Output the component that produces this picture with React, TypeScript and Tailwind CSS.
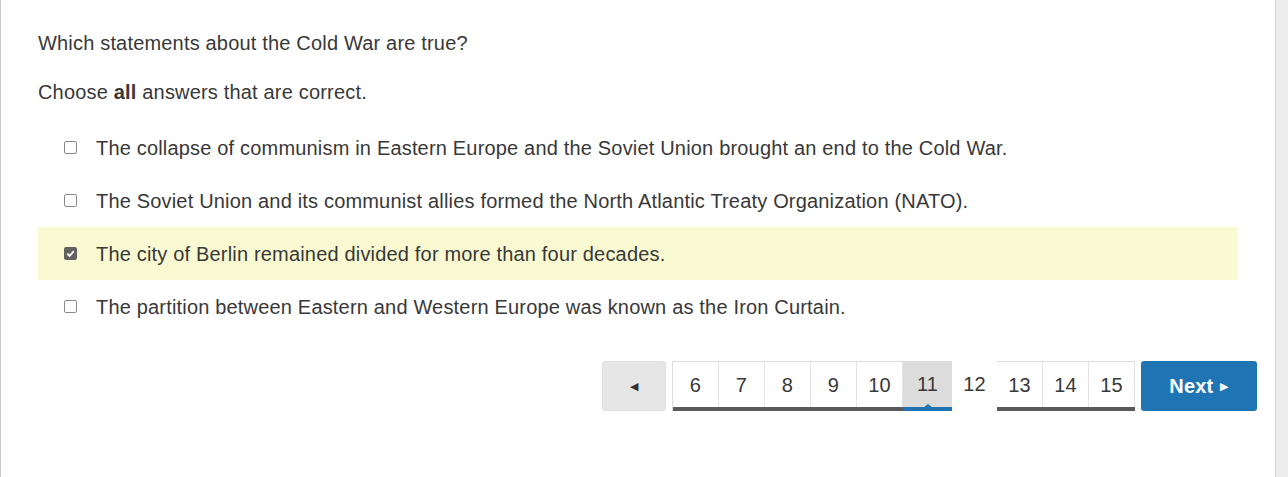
import React from 'react';

const options = [
  { text: 'The collapse of communism in Eastern Europe and the Soviet Union brought an end to the Cold War.', checked: false },
  { text: 'The Soviet Union and its communist allies formed the North Atlantic Treaty Organization (NATO).', checked: false },
  { text: 'The city of Berlin remained divided for more than four decades.', checked: true },
  { text: 'The partition between Eastern and Western Europe was known as the Iron Curtain.', checked: false },
];

const pages = [6, 7, 8, 9, 10, 11, 12, 13, 14, 15];

const Checkbox: React.FC<{ checked: boolean }> = ({ checked }) =>
  checked ? (
    <span className="w-[13px] h-[13px] rounded-[2px] bg-[#616161] flex items-center justify-center shrink-0">
      <svg width="9" height="9" viewBox="0 0 10 10">
        <path d="M1.5 5.2 L4 7.6 L8.6 2.4" fill="none" stroke="white" strokeWidth="2" />
      </svg>
    </span>
  ) : (
    <span className="w-[13px] h-[13px] rounded-[2px] border border-[#8a8a8a] bg-white shrink-0" />
  );

const PageCell: React.FC<{ n: number }> = ({ n }) => {
  if (n === 11) {
    return (
      <div className="relative w-[49px] h-[50px] flex flex-col">
        <div className="flex-1 bg-[#dcdcdc] flex items-center justify-center">{n}</div>
        <div className="h-[4px] bg-[#1f74b4]" />
        <div className="absolute left-1/2 -translate-x-1/2 bottom-[3px] w-0 h-0 border-l-[5px] border-r-[5px] border-b-[4px] border-l-transparent border-r-transparent border-b-[#1f74b4]" />
      </div>
    );
  }
  if (n === 12) {
    return (
      <div className="w-[45px] h-[50px] flex flex-col">
        <div className="flex-1 flex items-center justify-center">{n}</div>
        <div className="h-[4px]" />
      </div>
    );
  }
  return (
    <div className="w-[46px] h-[50px] flex flex-col">
      <div className="flex-1 border-t border-[#dcdcdc] border-r border-r-[#e3e3e3] flex items-center justify-center">{n}</div>
      <div className="h-[4px] bg-[#5a5a5a]" />
    </div>
  );
};

export default function App() {
  return (
    <div
      className="w-[1288px] h-[477px] flex bg-white text-[#383838] text-[20px] tracking-[0.18px] overflow-hidden"
      style={{ fontFamily: '"Liberation Sans", Arial, sans-serif' }}
    >
      <div className="w-[1275px] h-full border-l border-[#c8c8c8] pl-[37px] pr-[18px] pt-[30px] flex flex-col">
        <p className="leading-[26px]">Which statements about the Cold War are true?</p>
        <p className="leading-[26px] mt-[23px]">
          Choose <b>all</b> answers that are correct.
        </p>
        <div className="mt-[16px] w-[1200px] flex flex-col">
          {options.map((o, i) => (
            <div
              key={i}
              className={`h-[53px] flex items-center pl-[26px] gap-[19px] ${o.checked ? 'bg-[#fafad2]' : ''}`}
            >
              <Checkbox checked={o.checked} />
              <span className="leading-[26px]">{o.text}</span>
            </div>
          ))}
        </div>
        <div className="mt-[28px] flex justify-end items-start">
          <button className="w-[64px] h-[50px] rounded-[3px] bg-[#e6e6e6] border border-[#e0e0e0] flex items-center justify-center">
            <span className="text-[11px] text-[#333]">◀</span>
          </button>
          <div className="ml-[6px] flex border-l border-[#dcdcdc]">
            {pages.map((n) => (
              <PageCell key={n} n={n} />
            ))}
          </div>
          <button className="ml-[6px] w-[116px] h-[50px] rounded-[3px] bg-[#1f74b4] text-white flex items-center justify-center gap-[7px]">
            <span className="font-semibold">Next</span>
            <span className="text-[11px]">▶</span>
          </button>
        </div>
      </div>
      <div className="flex-1 h-full border-l border-[#d0d0d0] bg-[#ededed]" />
    </div>
  );
}
